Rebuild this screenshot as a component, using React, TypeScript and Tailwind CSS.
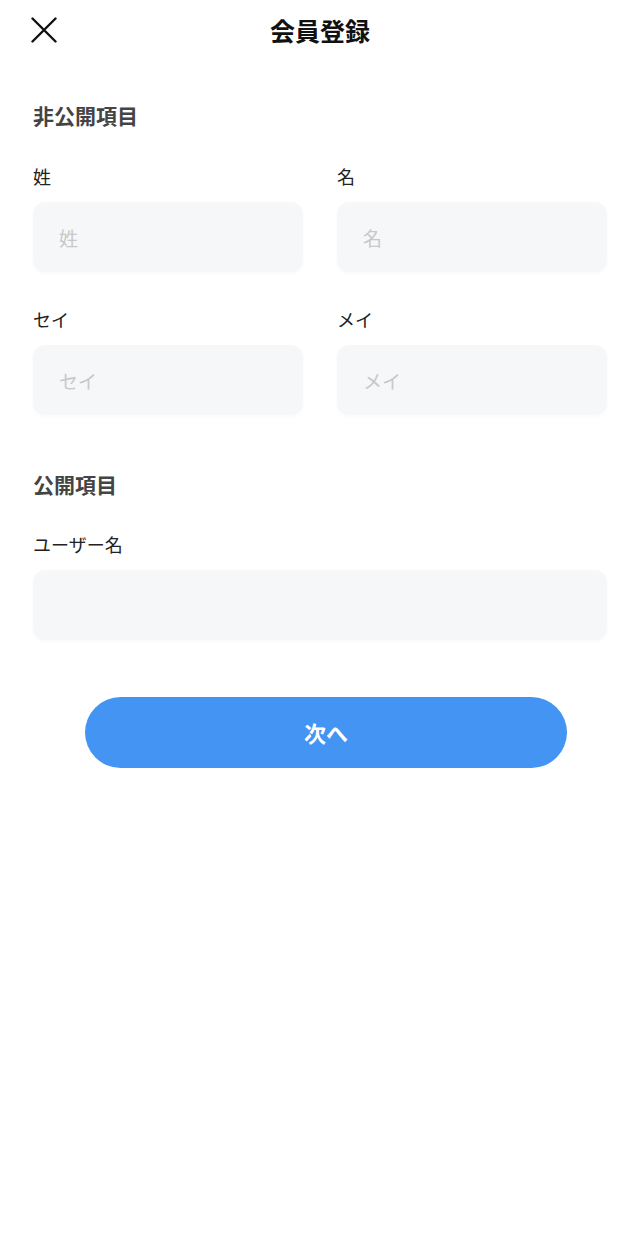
import React from 'react';

const font = { fontFamily: '"Noto Sans CJK JP", "Noto Sans", sans-serif' };

function Field({ label, placeholder }: { label: string; placeholder?: string }) {
  return (
    <div className="flex flex-col flex-1 min-w-0">
      <label className="text-[18px] leading-[24px] text-[#222]">{label}</label>
      <input
        placeholder={placeholder}
        className="mt-[14px] h-[70px] w-full rounded-[12px] bg-[#f6f7f9] px-[26px] text-[19px] text-[#222] placeholder:text-[#c8c8c8] outline-none shadow-[0_2px_5px_rgba(0,0,0,0.025)]"
        style={font}
      />
    </div>
  );
}

export default function App() {
  return (
    <div className="min-h-[1241px] w-[640px] bg-white" style={font}>
      {/* Header */}
      <div className="relative h-[60px] flex items-center justify-center">
        <button className="absolute left-[31px] top-[17px] w-[26px] h-[26px]">
          <svg viewBox="0 0 26 26" className="w-[26px] h-[26px]" stroke="#111" strokeWidth="2.4" strokeLinecap="round">
            <path d="M1.5 1.5 L24.5 24.5 M24.5 1.5 L1.5 24.5" />
          </svg>
        </button>
        <h1 className="text-[25px] font-bold text-[#111] leading-[32px]">会員登録</h1>
      </div>

      <div className="px-[33px]">
        <h2 className="mt-[41px] text-[21px] leading-[28px] font-bold text-[#444]">非公開項目</h2>

        <div className="mt-[35px] flex gap-[34px]">
          <Field label="姓" placeholder="姓" />
          <Field label="名" placeholder="名" />
        </div>

        <div className="mt-[35px] flex gap-[34px]">
          <Field label="セイ" placeholder="セイ" />
          <Field label="メイ" placeholder="メイ" />
        </div>

        <h2 className="mt-[55px] text-[21px] leading-[28px] font-bold text-[#444]">公開項目</h2>

        <div className="mt-[34px] flex">
          <Field label="ユーザー名" />
        </div>

        <div className="mt-[57px] flex">
          <button className="ml-[52px] w-[482px] h-[71px] rounded-full bg-[#4394f3] text-white text-[22px] font-bold">
            次へ
          </button>
        </div>
      </div>
    </div>
  );
}
